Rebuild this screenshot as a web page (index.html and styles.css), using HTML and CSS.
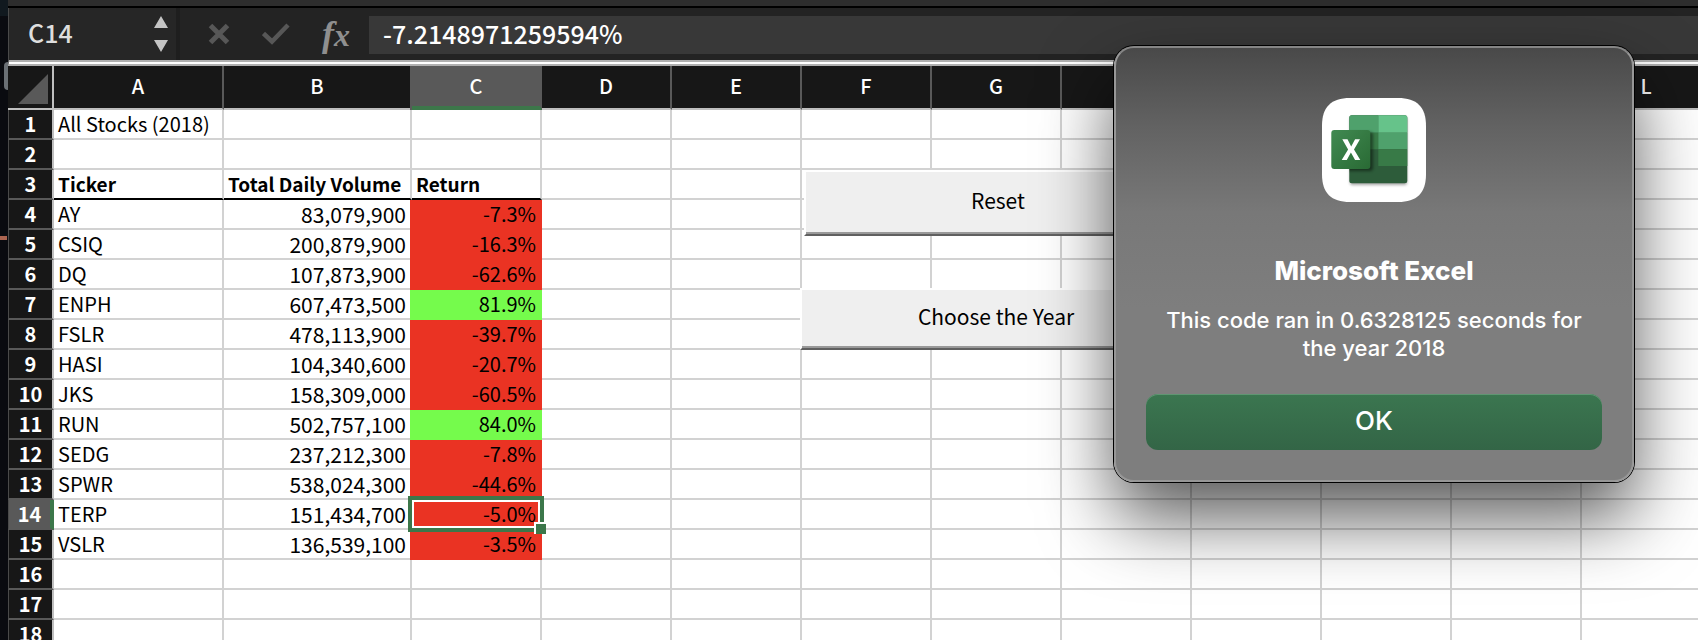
FILE: index.html
```html
<!DOCTYPE html>
<html lang="en">
<head>
<meta charset="utf-8">
<title>All Stocks (2018)</title>
<link rel="stylesheet" href="styles.css">
</head>
<body>
<div class="desktop" aria-hidden="true"><span class="desktop-tab"></span><span class="desktop-mark"></span></div>
<main class="window">
  <div class="ribbon-edge"></div>
  <div class="formula-bar">
    <div class="name-box">
      <input class="name-input" type="text" value="C14" aria-label="Name box">
      <button class="icon-button" type="button" aria-label="Choose name">
        <svg width="14" height="36" viewBox="0 0 14 36"><path fill="#c4c4c4" d="M7 0l7 12H0zM7 36l7-12H0z"/></svg>
      </button>
    </div>
    <div class="formula-tools">
      <button class="icon-button" type="button" aria-label="Cancel">
        <svg width="22" height="22" viewBox="0 0 22 22"><path d="M2.500 2.500l17 17M19.500 2.500l-17 17" stroke="#575757" stroke-width="5" fill="none"/></svg>
      </button>
      <button class="icon-button" type="button" aria-label="Enter">
        <svg width="28" height="22" viewBox="0 0 28 22"><path d="M1.500 10.500l8.500 8L26 2" stroke="#575757" stroke-width="4.500" fill="none"/></svg>
      </button>
      <button class="icon-button fx" type="button" aria-label="Insert function">f<span class="fx-x">x</span></button>
    </div>
    <input class="formula-input" type="text" value="-7.2148971259594%" aria-label="Formula">
  </div>
  <div class="sheet">
    <table class="grid">
      <colgroup><col class="col-num"><col class="col-a"><col class="col-b"><col span="10" class="col-std"></colgroup>
      <thead>
        <tr><th class="corner"><svg width="30" height="30" viewBox="0 0 30 30"><path fill="#595959" d="M30 0v30H0z"/></svg></th><th>A</th><th>B</th><th class="active">C</th><th>D</th><th>E</th><th>F</th><th>G</th><th>H</th><th>I</th><th>J</th><th>K</th><th>L</th></tr>
      </thead>
      <tbody>
        <tr><th>1</th><td>All Stocks (2018)</td><td></td><td></td><td></td><td></td><td></td><td></td><td></td><td></td><td></td><td></td><td></td></tr>
        <tr><th>2</th><td></td><td></td><td></td><td></td><td></td><td></td><td></td><td></td><td></td><td></td><td></td><td></td></tr>
        <tr><th>3</th><td class="title">Ticker</td><td class="title">Total Daily Volume</td><td class="title">Return</td><td></td><td></td><td></td><td></td><td></td><td></td><td></td><td></td><td></td></tr>
        <tr><th>4</th><td>AY</td><td class="num">83,079,900</td><td class="rate loss">-7.3%</td><td></td><td></td><td></td><td></td><td></td><td></td><td></td><td></td><td></td></tr>
        <tr><th>5</th><td>CSIQ</td><td class="num">200,879,900</td><td class="rate loss">-16.3%</td><td></td><td></td><td></td><td></td><td></td><td></td><td></td><td></td><td></td></tr>
        <tr><th>6</th><td>DQ</td><td class="num">107,873,900</td><td class="rate loss">-62.6%</td><td></td><td></td><td></td><td></td><td></td><td></td><td></td><td></td><td></td></tr>
        <tr><th>7</th><td>ENPH</td><td class="num">607,473,500</td><td class="rate gain">81.9%</td><td></td><td></td><td></td><td></td><td></td><td></td><td></td><td></td><td></td></tr>
        <tr><th>8</th><td>FSLR</td><td class="num">478,113,900</td><td class="rate loss">-39.7%</td><td></td><td></td><td></td><td></td><td></td><td></td><td></td><td></td><td></td></tr>
        <tr><th>9</th><td>HASI</td><td class="num">104,340,600</td><td class="rate loss">-20.7%</td><td></td><td></td><td></td><td></td><td></td><td></td><td></td><td></td><td></td></tr>
        <tr><th>10</th><td>JKS</td><td class="num">158,309,000</td><td class="rate loss">-60.5%</td><td></td><td></td><td></td><td></td><td></td><td></td><td></td><td></td><td></td></tr>
        <tr><th>11</th><td>RUN</td><td class="num">502,757,100</td><td class="rate gain">84.0%</td><td></td><td></td><td></td><td></td><td></td><td></td><td></td><td></td><td></td></tr>
        <tr><th>12</th><td>SEDG</td><td class="num">237,212,300</td><td class="rate loss">-7.8%</td><td></td><td></td><td></td><td></td><td></td><td></td><td></td><td></td><td></td></tr>
        <tr><th>13</th><td>SPWR</td><td class="num">538,024,300</td><td class="rate loss">-44.6%</td><td></td><td></td><td></td><td></td><td></td><td></td><td></td><td></td><td></td></tr>
        <tr><th class="active">14</th><td>TERP</td><td class="num">151,434,700</td><td class="rate loss selected">-5.0%<span class="selection"></span><span class="handle"></span></td><td></td><td></td><td></td><td></td><td></td><td></td><td></td><td></td><td></td></tr>
        <tr><th>15</th><td>VSLR</td><td class="num">136,539,100</td><td class="rate loss">-3.5%</td><td></td><td></td><td></td><td></td><td></td><td></td><td></td><td></td><td></td></tr>
        <tr><th>16</th><td></td><td></td><td></td><td></td><td></td><td></td><td></td><td></td><td></td><td></td><td></td><td></td></tr>
        <tr><th>17</th><td></td><td></td><td></td><td></td><td></td><td></td><td></td><td></td><td></td><td></td><td></td><td></td></tr>
        <tr><th>18</th><td></td><td></td><td></td><td></td><td></td><td></td><td></td><td></td><td></td><td></td><td></td><td></td></tr>
      </tbody>
    </table>
    <button class="sheet-button reset" type="button">Reset</button>
    <button class="sheet-button choose" type="button">Choose the Year</button>
  </div>
</main>
<section class="dialog" role="alertdialog" aria-labelledby="dialog-title" aria-describedby="dialog-text">
  <svg class="app-icon" width="104" height="104" viewBox="0 0 104 104" role="img" aria-label="Excel">
    <defs>
      <linearGradient id="tile" x1="0" y1="0" x2="1" y2="1"><stop offset="0" stop-color="#418a52"/><stop offset="1" stop-color="#296a34"/></linearGradient>
      <filter id="soft" x="-20%" y="-20%" width="150%" height="150%"><feGaussianBlur stdDeviation="1.500"/></filter>
      <clipPath id="book"><rect x="27.300" y="17.300" width="58" height="68" rx="2.500"/></clipPath>
    </defs>
    <path fill="#fff" d="M28 0H76C95 0 104 9 104 28V76C104 95 95 104 76 104H28C9 104 0 95 0 76V28C0 9 9 0 28 0z"/>
    <rect x="28" y="19" width="57" height="68" rx="2.500" fill="#000" opacity=".35" filter="url(#soft)"/>
    <g clip-path="url(#book)">
      <path fill="#2d5c3a" d="M27 17h59v69H27z"/>
      <path fill="#4fa16c" d="M27 17h29.300v17.700H27z"/>
      <path fill="#66c38a" d="M56.300 17H86v17.700H56.300z"/>
      <path fill="#387a47" d="M27 34.700h29.300v16.600H27z"/>
      <path fill="#4fa16c" d="M56.300 34.700H86v16.600H56.300z"/>
      <path fill="#387a47" d="M56.300 51.300H86V68H56.300z"/>
      <rect x="12" y="34" width="39" height="39" rx="3" fill="#000" opacity=".45" filter="url(#soft)"/>
    </g>
    <rect x="9.300" y="32" width="39" height="39" rx="3" fill="url(#tile)"/>
    <path fill="#fff" d="M20.300 41.300h5.200l3.700 7.200 3.900-7.200h4.900L32 51.600 38.300 62h-5.200l-4.200-7.500L24.800 62h-5.100l6.400-10.400z"/>
  </svg>
  <h1 class="dialog-title" id="dialog-title">Microsoft Excel</h1>
  <p class="dialog-text" id="dialog-text">This code ran in 0.6328125 seconds for the year 2018</p>
  <button class="ok" type="button">OK</button>
</section>
</body>
</html>
```
FILE: styles.css
```css
* { box-sizing: border-box; }

body {
  margin: 0;
  height: 100vh;
  display: flex;
  overflow: hidden;
  position: relative;
  background: #fff;
  font-family: "Noto Sans CJK SC", "Open Sans", sans-serif;
  color: #000;
}

button, input { font: inherit; margin: 0; border: 0; padding: 0; }

.desktop {
  flex: 0 0 8px;
  position: relative;
  overflow: hidden;
  background: linear-gradient(#11191f 16px, #0a0b10 16px);
}
.desktop-tab {
  position: absolute;
  left: 4px;
  top: 62px;
  width: 8px;
  height: 28px;
  border-radius: 6px;
  background: #6b7075;
}
.desktop-mark {
  position: absolute;
  left: 0;
  top: 236px;
  width: 7px;
  height: 4px;
  background: #ab6450;
}

.window { flex: 1; min-width: 0; display: flex; flex-direction: column; }
.ribbon-edge { flex: none; height: 8px; background: #2d2d2d; border-bottom: 2px solid #000; }

.formula-bar {
  flex: none;
  height: 58px;
  display: flex;
  align-items: flex-start;
  background: #232323;
  border-left: 1px solid #4a4a4a;
  border-bottom: 6px solid #b0b0b0;
  position: relative;
}
.formula-bar::after {
  content: "";
  position: absolute;
  left: 0;
  right: 0;
  bottom: -4px;
  height: 2px;
  background: #fff;
}
.name-box {
  width: 171px;
  height: 52px;
  display: flex;
  align-items: center;
  justify-content: space-between;
  padding: 0 8px 0 19px;
  background: #262626;
  border-right: 4px solid #1e1e1e;
}
.name-input {
  width: 100px;
  padding-bottom: 4px;
  background: transparent;
  color: #dedede;
  font-size: 25px;
  font-weight: 500;
  line-height: 32px;
}
.icon-button { display: flex; background: transparent; color: #8f8f8f; }
.formula-tools {
  width: 189px;
  height: 52px;
  display: flex;
  align-items: center;
  gap: 32px;
  padding: 0 0 0 28px;
}
.fx { align-items: baseline; font: italic bold 36px/44px "Liberation Serif", serif; }
.fx-x { font-size: 32px; }
.formula-input {
  flex: 1;
  min-width: 0;
  height: 38px;
  margin-top: 8px;
  padding: 0 14px 4px;
  background: #383838;
  color: #fff;
  font-size: 25px;
  font-weight: 500;
  line-height: 32px;
}

.sheet { flex: 1; min-height: 0; position: relative; overflow: hidden; }
.grid {
  width: 1704px;
  table-layout: fixed;
  border-collapse: separate;
  border-spacing: 0;
  font-size: 20px;
  line-height: 28px;
}
.col-num { width: 46px; }
.col-a { width: 170px; }
.col-b { width: 188px; }
.col-std { width: 130px; }

.grid th {
  padding: 0;
  background: #171717;
  color: #fff;
  text-align: center;
}
.grid thead th {
  height: 44px;
  padding-bottom: 2px;
  font-weight: 500;
  border-right: 2px solid #595959;
  border-bottom: 2px solid #bfbfbf;
}
.grid thead .corner {
  border-right-color: #bfbfbf;
  padding: 8px 4px 4px 10px;
  line-height: 0;
}
.grid thead .active {
  background: #595959;
  border-right-color: #595959;
  padding-bottom: 0;
  border-bottom: 4px solid #3c774a;
  box-shadow: -2px 0 0 #595959;
}
.grid tbody th {
  height: 30px;
  font-weight: 700;
  border-left: 1px solid #4a4a4a;
  border-right: 2px solid #bfbfbf;
  border-bottom: 2px solid #595959;
}
.grid tbody .active { background: #595959; border-right: 4px solid #3c774a; }
.grid td {
  height: 30px;
  padding: 0 4px;
  white-space: nowrap;
  border-right: 2px solid #d2d2d2;
  border-bottom: 2px solid #d2d2d2;
}
.grid .title { font-size: 19px; font-weight: 700; border-bottom-color: #000; }
.grid .num { font-size: 21px; text-align: right; }
.grid .rate { text-align: right; }
.grid .loss { background: #ea3323; border-color: #ea3323; box-shadow: -2px 0 0 #ea3323; }
.grid .gain { background: #75fb4c; border-color: #75fb4c; box-shadow: -2px 0 0 #75fb4c; }
.grid .selected { position: relative; z-index: 1; }
.selection {
  position: absolute;
  inset: -4px;
  border: 4px solid #3c774a;
  box-shadow: inset 0 0 0 2px #fff;
}
.handle {
  position: absolute;
  right: -6px;
  bottom: -6px;
  width: 12px;
  height: 12px;
  background: #3c774a;
  border: solid #fff;
  border-width: 2px 0 0 2px;
}

.sheet-button {
  position: absolute;
  padding-bottom: 6px;
  background: #efefef;
  color: #000;
  font-size: 21px;
  line-height: 28px;
  border: 2px solid #fff;
  border-bottom-color: #606060;
  box-shadow: inset 0 -2px 0 #999;
}
.reset { left: 796px; top: 104px; width: 388px; height: 66px; }
.choose { left: 792px; top: 222px; width: 392px; height: 62px; }

.dialog {
  position: absolute;
  left: 1114px;
  top: 46px;
  width: 520px;
  display: flex;
  flex-direction: column;
  align-items: center;
  padding: 50px 30px 30px;
  border: 2px solid #979797;
  border-top-color: #858585;
  border-radius: 20px;
  background: linear-gradient(#494949, #626262 18%, #787878 38%, #7e7e7e 60%);
  box-shadow: 0 0 0 1px #000, 0 36px 72px rgba(0, 0, 0, .65);
  color: #fff;
  font-family: Inter, "Liberation Sans", sans-serif;
  text-align: center;
}
.dialog-title { margin: 53px 0 0; font-size: 26px; line-height: 32px; font-weight: 800; }
.dialog-text { max-width: 440px; margin: 19px 0 0; font-size: 22px; line-height: 28px; font-weight: 500; }
.ok {
  align-self: stretch;
  height: 56px;
  margin-top: 32px;
  padding-bottom: 2px;
  border-radius: 12px;
  background: linear-gradient(#3b7650, #336546);
  box-shadow: inset 0 1px 0 #5f9672;
  color: #fff;
  font-size: 26px;
  line-height: 32px;
  font-weight: 500;
}
```
